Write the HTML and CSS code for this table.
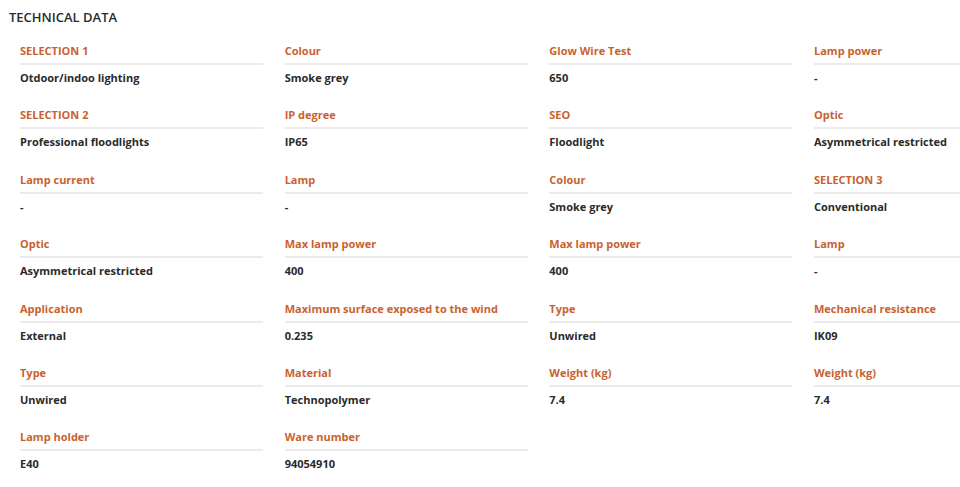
FILE: index.html
```html
<!DOCTYPE html>
<html>
<head>
<meta charset="utf-8">
<link rel="stylesheet" href="styles.css">
</head>
<body>
<div class="page">
  <h2 class="title">TECHNICAL DATA</h2>
  <div class="grid">
    <div class="item"><div class="label">SELECTION 1</div><div class="value">Otdoor/indoo lighting</div></div>
    <div class="item"><div class="label">Colour</div><div class="value">Smoke grey</div></div>
    <div class="item"><div class="label">Glow Wire Test</div><div class="value">650</div></div>
    <div class="item"><div class="label">Lamp power</div><div class="value">-</div></div>

    <div class="item"><div class="label">SELECTION 2</div><div class="value">Professional floodlights</div></div>
    <div class="item"><div class="label">IP degree</div><div class="value">IP65</div></div>
    <div class="item"><div class="label">SEO</div><div class="value">Floodlight</div></div>
    <div class="item"><div class="label">Optic</div><div class="value">Asymmetrical restricted</div></div>

    <div class="item"><div class="label">Lamp current</div><div class="value">-</div></div>
    <div class="item"><div class="label">Lamp</div><div class="value">-</div></div>
    <div class="item"><div class="label">Colour</div><div class="value">Smoke grey</div></div>
    <div class="item"><div class="label">SELECTION 3</div><div class="value">Conventional</div></div>

    <div class="item"><div class="label">Optic</div><div class="value">Asymmetrical restricted</div></div>
    <div class="item"><div class="label">Max lamp power</div><div class="value">400</div></div>
    <div class="item"><div class="label">Max lamp power</div><div class="value">400</div></div>
    <div class="item"><div class="label">Lamp</div><div class="value">-</div></div>

    <div class="item"><div class="label">Application</div><div class="value">External</div></div>
    <div class="item"><div class="label">Maximum surface exposed to the wind</div><div class="value">0.235</div></div>
    <div class="item"><div class="label">Type</div><div class="value">Unwired</div></div>
    <div class="item"><div class="label">Mechanical resistance</div><div class="value">IK09</div></div>

    <div class="item"><div class="label">Type</div><div class="value">Unwired</div></div>
    <div class="item"><div class="label">Material</div><div class="value">Technopolymer</div></div>
    <div class="item"><div class="label">Weight (kg)</div><div class="value">7.4</div></div>
    <div class="item"><div class="label">Weight (kg)</div><div class="value">7.4</div></div>

    <div class="item"><div class="label">Lamp holder</div><div class="value">E40</div></div>
    <div class="item"><div class="label">Ware number</div><div class="value">94054910</div></div>
  </div>
</div>
</body>
</html>
```
FILE: styles.css
```css
html, body {
  margin: 0;
  padding: 0;
  background: #ffffff;
}
.page {
  font-family: "Open Sans", "Liberation Sans", sans-serif;
  padding: 9px 0 0 9px;
}
.title {
  margin: 0;
  font-size: 13px;
  line-height: 16px;
  font-weight: 600;
  color: #2b2b2b;
}
.grid {
  display: grid;
  grid-template-columns: 243px 243px 243px 146px;
  column-gap: 21.67px;
  row-gap: 21.4px;
  margin: 18px 0 0 11px;
}
.label {
  font-size: 11px;
  line-height: 16px;
  font-weight: 700;
  color: #c9622f;
  padding-bottom: 4px;
  border-bottom: 2px solid #ebebeb;
  white-space: nowrap;
}
.value {
  font-size: 11px;
  line-height: 16px;
  font-weight: 700;
  color: #2a2a2a;
  margin-top: 5px;
  white-space: nowrap;
}
```
